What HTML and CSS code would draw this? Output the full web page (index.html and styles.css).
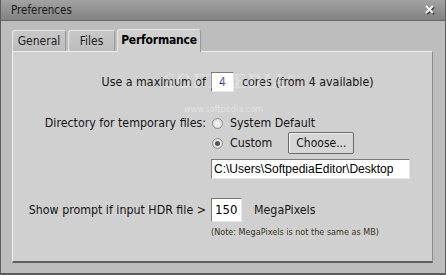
FILE: index.html
```html
<!DOCTYPE html>
<html lang="en">
<head>
  <meta charset="UTF-8" />
  <title>Preferences</title>
  <link rel="stylesheet" href="styles.css">
</head>
<body>
  <div class="window">
    <div class="titlebar">
      <span class="title">Preferences</span>
      <svg class="close" width="10" height="10" viewBox="0 0 10 10">
        <path d="M2 2 L9 9 M9 2 L2 9" stroke="#333" stroke-width="2.2"/>
        <path d="M1 1 L8 8 M8 1 L1 8" stroke="#f2f2f2" stroke-width="2.2"/>
      </svg>
    </div>
    <div class="tabs">
      <div class="tab tab-general">General</div>
      <div class="tab tab-files">Files</div>
      <div class="tab active">Performance</div>
    </div>
    <div class="panel">
      <div class="row row-cores">
        <div class="label">Use a maximum of</div>
        <div class="field small">4</div>
        <span class="after">cores (from 4 available)</span>
      </div>
      <div class="row row-dir">
        <div class="label">Directory for temporary files:</div>
        <span class="radio"></span>
        <span class="opt">System Default</span>
      </div>
      <div class="row row-custom">
        <div class="label"></div>
        <span class="radio checked"></span>
        <span class="opt">Custom</span>
        <button class="btn">Choose...</button>
      </div>
      <div class="row row-path">
        <div class="label"></div>
        <div class="field path">C:\Users\SoftpediaEditor\Desktop</div>
      </div>
      <div class="row row-hdr">
        <div class="label">Show prompt if input HDR file &gt;</div>
        <div class="field mp">150</div>
        <span class="after wide">MegaPixels</span>
      </div>
      <div class="row row-note">
        <div class="label"></div>
        <span class="note">(Note: MegaPixels is not the same as MB)</span>
      </div>
      <div class="watermark">SOFTPEDIA<sup>™</sup></div>
      <div class="watermark-url">www.softpedia.com</div>
    </div>
  </div>
</body>
</html>
```

FILE: styles.css
```css
body {
  margin: 0;
  padding: 0;
  font-family: "DejaVu Sans Condensed", "DejaVu Sans", sans-serif;
  color: #141414;
}
.window {
  width: 446px;
  height: 275px;
  box-sizing: border-box;
  background: #bdbdbd;
  border-left: 1px solid #5c5c5c;
  border-right: 1px solid #5c5c5c;
  border-bottom: 2px solid #5c5c5c;
  display: flex;
  flex-direction: column;
}
.titlebar {
  height: 21px;
  box-sizing: border-box;
  background: linear-gradient(#a2a2a2, #828282);
  border-bottom: 1px solid #6a6a6a;
  display: flex;
  align-items: center;
  justify-content: space-between;
  padding: 0 10px 0 10px;
}
.title {
  font-size: 11.5px;
  color: #181818;
}
.close {
  margin-top: -1px;
}
.tabs {
  display: flex;
  align-items: flex-end;
  gap: 2px;
  margin: 8px 0 0 11px;
  height: 22px;
}
.tab {
  height: 21px;
  box-sizing: border-box;
  text-align: center;
  font-size: 12px;
  line-height: 20px;
  color: #222;
  background: linear-gradient(#c8c8c8, #bcbcbc);
  border: 1px solid #e6e6e6;
  border-bottom: none;
  border-right-color: #9a9a9a;
  border-radius: 3px 3px 0 0;
}
.tab-general { width: 54px; }
.tab-files { width: 47px; }
.tab.active {
  width: 84px;
  height: 23px;
  margin-bottom: -1px;
  background: #d0d0d0;
  font-weight: bold;
  letter-spacing: -0.2px;
  color: #000;
  position: relative;
  z-index: 1;
}
.panel {
  position: relative;
  margin: 0 12px 0 11px;
  height: 212px;
  box-sizing: border-box;
  background: #d0d0d0;
  border: 1px solid #efefef;
  border-right-color: #8c8c8c;
  border-bottom: 2px solid #5e5e5e;
  padding-top: 20px;
  display: flex;
  flex-direction: column;
  font-size: 12.3px;
}
.row {
  display: flex;
  align-items: center;
}
.label {
  width: 193px;
  flex-shrink: 0;
  text-align: right;
  margin-right: 5px;
  white-space: nowrap;
}
.row-cores { height: 20px; }
.row-dir { height: 18px; margin-top: 22px; }
.row-custom { height: 22px; }
.row-path { height: 20px; margin-top: 5px; }
.row-hdr { height: 24px; margin-top: 19px; }
.row-note { height: 12px; margin-top: 4px; }
.field {
  box-sizing: border-box;
  background: #fff;
  border: 1px solid #7a7a7a;
  border-right-color: #e8e8e8;
  border-bottom-color: #e8e8e8;
  height: 20px;
  line-height: 18px;
  font-size: 12px;
  color: #000;
}
.small {
  width: 23px;
  text-align: center;
  color: #1a1a8a;
}
.path {
  width: 199px;
  padding-left: 2px;
  font-family: "Liberation Sans", sans-serif;
  font-size: 12px;
  white-space: nowrap;
  overflow: hidden;
}
.mp {
  width: 31px;
  height: 24px;
  line-height: 22px;
  padding-left: 3px;
  font-size: 13px;
}
.after {
  margin-left: 8px;
}
.after.wide {
  margin-left: 12px;
}
.radio {
  width: 11px;
  height: 11px;
  box-sizing: border-box;
  border-radius: 50%;
  border: 1px solid #8a8a8a;
  background: radial-gradient(#f4f4f4, #d6d6d6);
  margin-left: 1px;
  margin-right: 7px;
  position: relative;
}
.radio.checked::after {
  content: "";
  position: absolute;
  left: 2px;
  top: 2px;
  width: 5px;
  height: 5px;
  border-radius: 50%;
  background: #555;
}
.btn {
  margin-left: 16px;
  height: 22px;
  width: 66px;
  padding: 0;
  font-family: inherit;
  font-size: 12px;
  color: #141414;
  background: #d6d6d6;
  border: 1px solid #6a6a6a;
  border-radius: 2px;
  box-shadow: inset 1px 1px 0 #f0f0f0;
}
.note {
  font-size: 9px;
  color: #3a3020;
}
.watermark {
  position: absolute;
  left: 151px;
  top: 18px;
  font-family: "Liberation Serif", serif;
  font-weight: bold;
  font-size: 20px;
  letter-spacing: 1px;
  color: rgba(255, 255, 255, 0.3);
}
.watermark sup {
  font-size: 8px;
}
.watermark-url {
  position: absolute;
  left: 171px;
  top: 52px;
  font-size: 9px;
  color: rgba(255, 255, 255, 0.4);
}
```
